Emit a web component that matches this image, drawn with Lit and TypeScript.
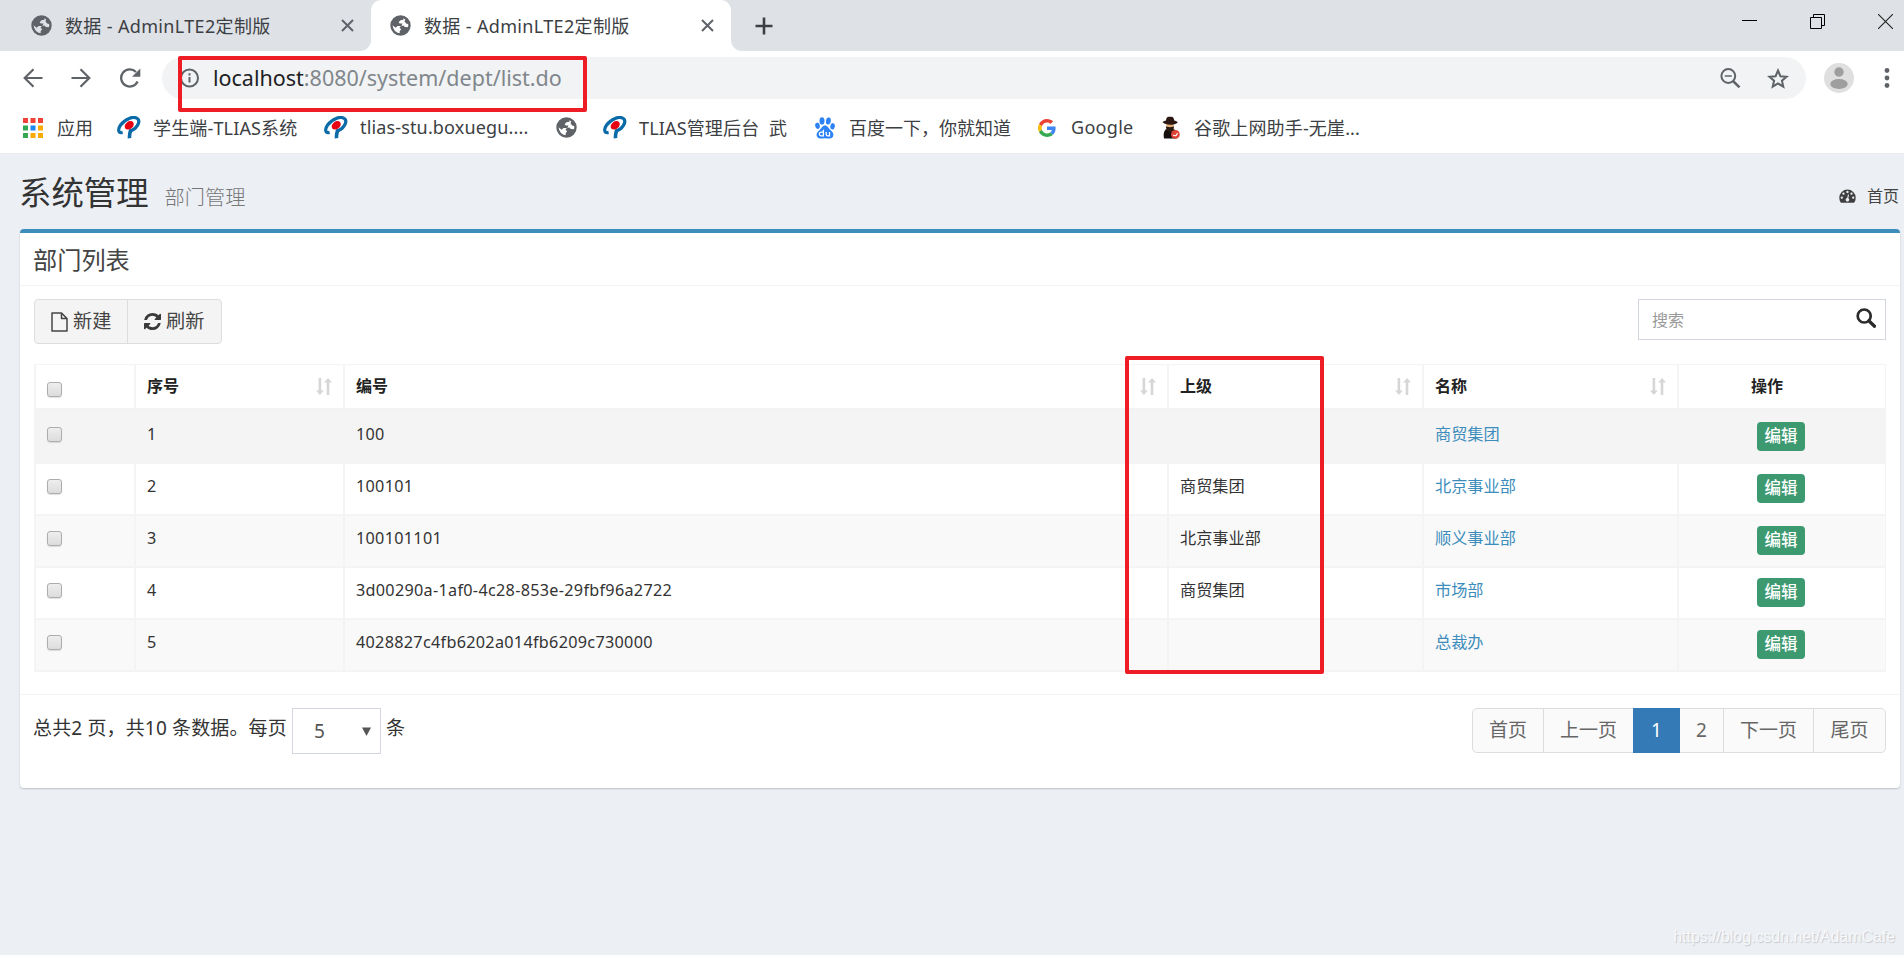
import { LitElement, html, css, svg, nothing } from "lit";
import { customElement } from "lit/decorators.js";

const globe = html`<svg width="21" height="21" viewBox="0 0 21 21"><circle cx="10.5" cy="10.5" r="9" fill="var(--globe-bg, #fff)" stroke="#5f6368" stroke-width="2.400"/><path d="M9.500 1.500C5 2 1.800 5.500 1.500 9.500l4.200 3.200 1.800-1.800h3.800l1.200-2.400h-2.700L8.600 7.200l1.900-1.900 3-.6V2.200zM10.800 11l-1.300 1.700 1.700 1.600-1.500 1.600v3.600c4.500 0 8-2.900 9.300-7.200l-4.200-.4-1.300-1.300zM15.500 3.500l-1 3 2 2.300 2.500.2c-.5-2.400-1.700-4.300-3.500-5.500z" fill="#5f6368"/></svg>`;
const tlias = html`<svg width="24" height="23" viewBox="0 0 24 23"><path d="M5.600 16.400C1.200 17.400.500 13.500 3.600 9 8 2.800 16.500-.200 20.300 2.500c4 3-1 11-7.800 12.600" fill="none" stroke="#0a6ba8" stroke-width="3.200"/><path d="M12 13.500c-1 3-1.300 5.500-1.300 9l3.600-.500c-.2-3 .4-5 1.600-8z" fill="#0a6ba8"/><ellipse cx="12.200" cy="9.300" rx="5" ry="3.700" transform="rotate(-38 12.200 9.300)" fill="#e60012"/></svg>`;
const baidu = html`<svg width="20" height="22" viewBox="0 0 20 22"><g fill="#2d82f5"><ellipse cx="7" cy="3.900" rx="2.500" ry="3.600"/><ellipse cx="13.400" cy="4" rx="2.400" ry="3.500" transform="rotate(8 13.400 4)"/><ellipse cx="2.500" cy="8.800" rx="2.300" ry="3.200" transform="rotate(-12 2.500 8.800)"/><ellipse cx="17.600" cy="9.300" rx="2.300" ry="3.200" transform="rotate(8 17.600 9.300)"/><path d="M10 8.500c2.600 0 3.300 2.600 5.400 4.400 2.400 2 3.600 3.700 2.800 6-.9 2.600-3.300 2.800-8.200 2.300-4.900.5-7.300.3-8.200-2.300-.8-2.300.4-4 2.800-6C6.700 11.100 7.400 8.500 10 8.500z"/></g><path d="M8.400 12.800v6H6.200a1.800 1.800 0 0 1 0-3.700h2M11.200 15v2.300q0 1.500 1.400 1.500h1.900V15" stroke="#fff" stroke-width="1.300" fill="none"/></svg>`;
const google = html`<svg width="18" height="18" viewBox="0 0 48 48"><path fill="#EA4335" d="M24 9.500c3.540 0 6.710 1.220 9.210 3.600l6.850-6.850C35.900 2.380 30.470 0 24 0 14.620 0 6.510 5.380 2.560 13.220l7.980 6.190C12.430 13.720 17.740 9.500 24 9.500z"/><path fill="#4285F4" d="M46.980 24.550c0-1.570-.15-3.090-.38-4.550H24v9.020h12.940c-.58 2.960-2.260 5.480-4.780 7.180l7.730 6c4.510-4.180 7.090-10.360 7.090-17.650z"/><path fill="#FBBC05" d="M10.530 28.590c-.48-1.450-.76-2.990-.76-4.590s.27-3.140.76-4.590l-7.980-6.190C.92 16.460 0 20.120 0 24c0 3.880.92 7.540 2.560 10.780l7.970-6.190z"/><path fill="#34A853" d="M24 48c6.480 0 11.930-2.130 15.890-5.810l-7.730-6c-2.150 1.450-4.920 2.300-8.160 2.300-6.260 0-11.570-4.220-13.470-9.910l-7.980 6.190C6.510 42.620 14.620 48 24 48z"/></svg>`;
const agent = html`<svg width="18" height="23" viewBox="0 0 18 23"><path d="M2 22.500c-.7-4-.5-7 2-9.500l3.800 2.500L12 13c2.400 2 3 5.500 2.400 9.500z" fill="#15100e"/><path d="M4.200 7.500h7.600l-.3 4.500-3.500 2.500L4.500 12z" fill="#e5ae78"/><path d="M3.800 10.500l4 .8 4.300-.8-.8 4-3.400 2-3.200-2z" fill="#2a1a12"/><path d="M.5 6.300C1.800 5 3 5 4 4.600 4.200 1.200 5.500.2 8 .8c2.800-.6 4 .6 4.200 3.700 1.200.4 2.300.5 3.600 1.900-3 3-12 3.200-15.300-.1z" fill="#2c1712"/><circle cx="13.400" cy="18.400" r="4.400" fill="#dd4435"/><path d="M11 19.500c1-.8 1.800.8 3 0s.5-2 1.800-2.300" stroke="#fff" stroke-width="1.100" fill="none"/></svg>`;
const appColors = ["#f04238", "#f04238", "#f04238", "#34a853", "#1e88f5", "#fbab05", "#34a853", "#fbab05", "#fbab05"];
const apps = html`<svg width="20" height="20" viewBox="0 0 20 20">${appColors.map((c, i) => svg`<rect x=${(i % 3) * 7.5} y=${Math.floor(i / 3) * 7.5} width="5" height="5" fill=${c} />`)}</svg>`;
const closeX = html`<svg width="13" height="13" viewBox="0 0 13 13"><path d="M1 1l11 11M12 1L1 12" stroke="#5f6368" stroke-width="2"/></svg>`;
const sortIcon = html`<svg class="sort" width="16" height="17" viewBox="0 0 16 17"><path d="M2.600 0h2.600v12.500h2.600l-3.900 4.500-3.900-4.500h2.600zM10.700 17h2.600V4.500H16L12.100 0 8.100 4.500h2.600z" fill="#d6d6d6"/></svg>`;

interface Bookmark { cls: string; icon: unknown; text: string; }
const bookmarks: Bookmark[] = [
  { cls: "m-apps", icon: apps, text: "应用" },
  { cls: "m-stu", icon: tlias, text: "学生端-TLIAS系统" },
  { cls: "m-box", icon: tlias, text: "tlias-stu.boxuegu...." },
  { cls: "m-globe", icon: globe, text: "" },
  { cls: "m-admin", icon: tlias, text: "TLIAS管理后台  武" },
  { cls: "m-baidu", icon: baidu, text: "百度一下，你就知道" },
  { cls: "m-google", icon: google, text: "Google" },
  { cls: "m-agent", icon: agent, text: "谷歌上网助手-无崖..." },
];

interface Dept { id: number; code: string; parent: string; name: string; }
const rows: Dept[] = [
  { id: 1, code: "100", parent: "", name: "商贸集团" },
  { id: 2, code: "100101", parent: "商贸集团", name: "北京事业部" },
  { id: 3, code: "100101101", parent: "北京事业部", name: "顺义事业部" },
  { id: 4, code: "3d00290a-1af0-4c28-853e-29fbf96a2722", parent: "商贸集团", name: "市场部" },
  { id: 5, code: "4028827c4fb6202a014fb6209c730000", parent: "", name: "总裁办" },
];

@customElement("browser-chrome")
export class BrowserChrome extends LitElement {
  static styles = css`
    :host { display: block; height: 153px; background: #fff; border-bottom: 1px solid #ededed; color: #3c4043; font-size: 18px; }
    svg { display: block; flex: none; }
    .strip { display: flex; background: linear-gradient(#dee1e6 40px, #fff 40px); }
    .tab { display: flex; align-items: center; height: 51px; box-sizing: border-box; padding: 0 17px 1px 19px; white-space: nowrap; letter-spacing: 0.35px; }
    .first { width: 371px; padding-left: 31px; background: #dee1e6; border-radius: 0 0 11px 0; --globe-bg: #dee1e6; }
    .active { width: 360px; background: #fff; border-radius: 10px 10px 0 0; }
    .rest { flex: 1; display: flex; background: #dee1e6; border-radius: 0 0 0 11px; }
    .label { margin-left: 13px; flex: 1; }
    .plus { margin: 17px auto 0 24px; }
    .win { display: flex; gap: 53px; margin: 14px 11px 0 0; }
    .bar { display: flex; align-items: center; height: 54px; box-sizing: border-box; padding: 0 14px 0 23px; }
    .nav { display: flex; gap: 28px; width: 139px; }
    .url { display: flex; align-items: center; width: 1644px; height: 42px; box-sizing: border-box; border-radius: 21px; background: #f1f3f4; padding: 0 17px 0 18px; }
    .addr { margin-left: 14px; font-size: 21.5px; line-height: 41px; padding-bottom: 1px; color: #80868b; flex: 1; }
    .host { color: #202124; }
    .star { margin-left: 26px; }
    .avatar { margin-left: 18px; }
    .dots { margin-left: 30px; }
    .marks { display: flex; align-items: center; height: 44px; padding: 0 0 0 23px; white-space: pre; letter-spacing: 0.15px; }
    .marks svg { margin-top: 1px; }
    .mark { display: flex; align-items: center; box-sizing: border-box; }
    .m-apps { width: 94px; gap: 14px; letter-spacing: 0; }
    .m-stu { width: 207px; gap: 12px; }
    .m-box { width: 232px; gap: 12px; }
    .m-globe { width: 47px; }
    .m-admin { width: 212px; gap: 12px; }
    .m-baidu { width: 223px; gap: 14px; letter-spacing: 0; }
    .m-google { width: 124px; gap: 15px; letter-spacing: 0.3px; }
    .m-agent { gap: 14px; }
  `;
  render() {
    return html`
      <div class="strip">
        <div class="tab first">${globe}<span class="label">数据 - AdminLTE2定制版</span>${closeX}</div>
        <div class="tab active">${globe}<span class="label">数据 - AdminLTE2定制版</span>${closeX}</div>
        <div class="rest">
          <svg class="plus" width="18" height="18" viewBox="0 0 18 18"><path d="M9 .5v17M.5 9h17" stroke="#3c4043" stroke-width="2.600"/></svg>
          <div class="win">
            <svg width="15" height="15" viewBox="0 0 15 15"><path d="M0 6.500h15" stroke="#000"/></svg>
            <svg width="15" height="15" viewBox="0 0 15 15"><path d="M.5 3.500h11v11H.500zM3.500 3.500v-3h11v11h-3" stroke="#000" fill="none"/></svg>
            <svg width="15" height="15" viewBox="0 0 15 15"><path d="M0 0l15 15M15 0L0 15" stroke="#222" stroke-width="1.100"/></svg>
          </div>
        </div>
      </div>
      <div class="bar">
        <div class="nav">
          <svg width="20" height="20" viewBox="0 0 20 20"><path d="M19.500 10H2M10.500 1.200L1.700 10l8.800 8.800" stroke="#5f6368" stroke-width="2.200" fill="none"/></svg>
          <svg width="20" height="20" viewBox="0 0 20 20"><path d="M.5 10H18M9.500 1.200l8.800 8.800-8.800 8.800" stroke="#5f6368" stroke-width="2.200" fill="none"/></svg>
          <svg width="22" height="20" viewBox="0 0 22 20"><path d="M18.600 13.500A8.600 8.600 0 1 1 17 4" stroke="#5f6368" stroke-width="2.300" fill="none"/><path d="M21.300.500v8.200h-8.200z" fill="#5f6368"/></svg>
        </div>
        <div class="url">
          <svg width="19" height="20" viewBox="0 0 19 20"><circle cx="9.500" cy="10" r="8.500" stroke="#5f6368" stroke-width="2" fill="none"/><path d="M9.500 9v5.500M9.500 5.200v2.200" stroke="#5f6368" stroke-width="2"/></svg>
          <span class="addr"><span class="host">localhost</span>:8080/system/dept/list.do</span>
          <svg width="21" height="20" viewBox="0 0 21 20"><circle cx="8.300" cy="8" r="6.900" stroke="#5f6368" stroke-width="2" fill="none"/><path d="M13 13l6.500 6.300" stroke="#5f6368" stroke-width="2.500"/><path d="M4.800 8h7" stroke="#5f6368" stroke-width="1.500"/></svg>
          <svg class="star" width="22" height="21" viewBox="0 0 22 21"><path d="M11 2.500l2.400 5.700 6.200.5-4.700 4 1.400 6L11 15.500l-5.300 3.200 1.400-6-4.700-4 6.200-.5z" stroke="#5f6368" stroke-width="2" fill="none"/></svg>
        </div>
        <svg class="avatar" width="30" height="30" viewBox="0 0 30 30"><circle cx="15" cy="15" r="15" fill="#dfdfdf"/><circle cx="15" cy="9" r="4.700" fill="#9e9e9e"/><ellipse cx="15" cy="21" rx="8.700" ry="5" fill="#9e9e9e"/></svg>
        <svg class="dots" width="6" height="20" viewBox="0 0 6 20"><g fill="#5f6368"><circle cx="3" cy="2.500" r="2.400"/><circle cx="3" cy="10" r="2.400"/><circle cx="3" cy="17.500" r="2.400"/></g></svg>
      </div>
      <div class="marks">${bookmarks.map((b) => html`<div class="mark ${b.cls}">${b.icon}${b.text ? html`<span>${b.text}</span>` : nothing}</div>`)}</div>`;
  }
}

@customElement("dept-page")
export class DeptPage extends LitElement {
  static styles = css`
    :host { display: block; padding: 0 4px 0 20px; color: #333; font-size: 16px; }
    svg { display: block; flex: none; }
    .head { display: flex; align-items: baseline; height: 75px; line-height: 76px; }
    .title { font-size: 32.4px; margin-left: -1px; }
    .sub { margin-left: 16px; font-size: 20.2px; font-weight: 300; color: #777; }
    .crumb { display: flex; align-items: center; gap: 11px; margin-left: auto; color: #444; height: 76px; line-height: 24px; padding: 8px 1px 0 0; box-sizing: border-box; align-self: flex-start; }
    .box { background: #fff; border-top: 4px solid #3c8dbc; border-radius: 4px; box-shadow: 0 1px 2px rgba(0, 0, 0, 0.2); height: 555px; }
    .boxhead { height: 52px; line-height: 53px; border-bottom: 1px solid #f4f4f4; font-size: 24.2px; color: #444; padding-left: 13px; }
    .tools { display: flex; justify-content: space-between; align-items: flex-start; padding: 13px 14px 0; height: 65px; box-sizing: content-box; }
    .btns { display: flex; height: 43px; border: 1px solid #ddd; border-radius: 4px; background: #f4f4f4; color: #444; font-size: 19.2px; line-height: 41px; }
    .btn { display: flex; align-items: center; box-sizing: border-box; }
    .btn span { padding-bottom: 2px; }
    .new { width: 93px; gap: 5px; padding-left: 16px; border-right: 1px solid #ddd; }
    .refresh { width: 93px; gap: 5px; padding-left: 16px; }
    .search { display: flex; align-items: center; justify-content: space-between; width: 248px; height: 41px; box-sizing: border-box; border: 1px solid #d2d6de; padding: 0 9px 0 13px; color: #999; }
    .search span { padding-bottom: 2px; }
    .search svg { margin-bottom: 4px; }
    table { width: 1852px; table-layout: fixed; border-collapse: separate; border-spacing: 0; margin-left: 14px; border-top: 1px solid #f4f4f4; border-right: 1px solid #f4f4f4; }
    th, td { box-sizing: border-box; border-left: 2px solid #f4f4f4; padding: 0 0 0 11px; text-align: left; vertical-align: top; white-space: nowrap; }
    th { height: 47px; border-bottom: 4px solid #f3f3f3; color: #222; line-height: 43px; }
    td { height: 52px; border-bottom: 2px solid #f4f4f4; line-height: 44px; font-size: 16.2px; }
    .c1 { width: 100px; } .c2 { width: 209px; } .c3 { width: 824px; } .c4 { width: 255px; } .c5 { width: 255px; }
    .odd td { background: #f9f9f9; }
    .hover td { background: #f4f4f4; }
    .th { display: flex; justify-content: space-between; padding-right: 11px; }
    .sort { margin-top: 13px; }
    .box1 { width: 15px; height: 15px; box-sizing: border-box; border: 1px solid #adadad; border-radius: 3px; background: linear-gradient(#eee, #dcdcdc); box-shadow: 0 1px 1px rgba(0, 0, 0, 0.12); margin-top: 15px; }
    th .box1 { margin-top: 17px; }
    .code { letter-spacing: 0.3px; }
    .link { color: #3c8dbc; }
    .op { padding: 0 30px 0 0; text-align: center; }
    td.op { padding: 10px 2px 0 0; }
    .edit { display: block; width: 48px; height: 29px; margin: 0 auto; line-height: 28px; border-radius: 4px; background: #3d9970; color: #fff; font-size: 16.5px; font-weight: 500; }
    .foot { display: flex; justify-content: space-between; align-items: flex-start; height: 93px; margin-top: 22px; border-top: 1px solid #f4f4f4; padding: 13px 14px 0 13px; box-sizing: border-box; font-size: 19px; }
    .total { display: flex; white-space: pre; line-height: 41px; letter-spacing: 0.15px; }
    .count { width: 259px; }
    .select { display: flex; align-items: center; justify-content: space-between; width: 89px; height: 46px; box-sizing: border-box; border: 1px solid #d2d6de; color: #555; padding: 0 9px 0 21px; margin-right: 5px; line-height: 44px; }
    .pages { display: flex; height: 45px; box-sizing: border-box; border: 1px solid #ddd; border-radius: 5px; background: #fafafa; color: #666; line-height: 42px; }
    .pg { box-sizing: border-box; text-align: center; border-left: 1px solid #ddd; width: 90px; }
    .w71 { width: 70px; border-left: none; }
    .cur { width: 47px; margin: -1px 0; line-height: 44px; background: #337ab7; color: #fff; border: none; }
    .two { width: 43px; border: none; }
    .last { width: 72px; }
  `;
  render() {
    return html`
      <div class="head">
        <span class="title">系统管理</span><span class="sub">部门管理</span>
        <span class="crumb"><svg width="17" height="14" viewBox="0 0 17 14"><path d="M8.500.5A8.200 8.200 0 0 0 .3 8.700c0 1.700.4 3.200 1.200 4.500.2.300.4.500.8.500h12.400c.4 0 .6-.2.800-.5.800-1.300 1.200-2.800 1.200-4.500A8.200 8.200 0 0 0 8.500.5z" fill="#3f3f3f"/><g fill="#ecf0f5"><circle cx="2.800" cy="8.700" r="1.150"/><circle cx="4.500" cy="4.700" r="1.150"/><circle cx="8.500" cy="3" r="1.150"/><circle cx="12.500" cy="4.700" r="1.150"/><circle cx="14.200" cy="8.700" r="1.150"/><path d="M9 5.500l1 .3-.7 3.400a1.800 1.800 0 1 1-1.100-.2z"/></g></svg><span>首页</span></span>
      </div>
      <div class="box">
        <div class="boxhead">部门列表</div>
        <div class="tools">
          <div class="btns">
            <div class="btn new"><svg width="17" height="20" viewBox="0 0 17 20"><path d="M1 1h9.500L16 6.500V19H1zM10.500 1v5.500H16" fill="none" stroke="#444" stroke-width="1.500" stroke-linejoin="round"/></svg><span>新建</span></div>
            <div class="btn refresh"><svg width="17" height="17" viewBox="0 0 1536 1536"><path fill="#3a3a3a" d="M1511 928q0 5-1 7-64 268-268 434.500T764 1536q-146 0-282.500-55T238 1324l-129 129q-19 19-45 19t-45-19-19-45V960q0-26 19-45t45-19h448q26 0 45 19t19 45-19 45l-137 137q71 66 161 102t187 36q134 0 250-65t186-179q11-17 53-117 8-23 30-23h192q13 0 22.500 9.500t9.500 22.500zm25-800v448q0 26-19 45t-45 19h-448q-26 0-45-19t-19-45 19-45l138-138Q969 256 768 256q-134 0-250 65T332 500q-11 17-53 117-8 23-30 23H50q-13 0-22.500-9.500T18 608v-7q65-268 270-434.500T768 0q146 0 284 55.500T1297 212l130-129q19-19 45-19t45 19 19 45z"/></svg><span>刷新</span></div>
          </div>
          <div class="search"><span>搜索</span><svg width="20" height="20" viewBox="0 0 20 20"><circle cx="8.200" cy="8" r="6.500" fill="none" stroke="#2b2b2b" stroke-width="2.700"/><path d="M12.800 12.800l5.700 5.400" stroke="#2b2b2b" stroke-width="3.300" stroke-linecap="round"/></svg></div>
        </div>
        <table>
          <thead><tr>
            <th class="c1"><div class="box1"></div></th>
            <th class="c2"><div class="th">序号${sortIcon}</div></th>
            <th class="c3"><div class="th">编号${sortIcon}</div></th>
            <th class="c4"><div class="th">上级${sortIcon}</div></th>
            <th class="c5"><div class="th">名称${sortIcon}</div></th>
            <th class="op">操作</th>
          </tr></thead>
          <tbody>${rows.map((r, i) => html`<tr class=${i === 0 ? "hover" : i % 2 ? "even" : "odd"}>
            <td><div class="box1"></div></td><td>${r.id}</td><td class="code">${r.code}</td><td>${r.parent}</td>
            <td><span class="link">${r.name}</span></td><td class="op"><span class="edit">编辑</span></td>
          </tr>`)}</tbody>
        </table>
        <div class="foot">
          <div class="total"><span class="count">总共2 页，共10 条数据。每页</span><span class="select"><span>5</span><svg width="9" height="9" viewBox="0 0 9 9"><path d="M0 .5h9L4.500 9z" fill="#555"/></svg></span><span>条</span></div>
          <div class="pages"><span class="pg w71">首页</span><span class="pg">上一页</span><span class="pg cur">1</span><span class="pg two">2</span><span class="pg">下一页</span><span class="pg last">尾页</span></div>
        </div>
      </div>`;
  }
}

@customElement("app-root")
export class AppRoot extends LitElement {
  static styles = css`
    :host { display: block; position: relative; height: 955px; overflow: hidden; background: #ecf0f5; font-family: "Noto Sans", "Noto Sans CJK SC", sans-serif; }
    .frame { position: absolute; box-sizing: border-box; border: 4px solid #ee1c25; border-radius: 2px; }
    .f-url { left: 178px; top: 56px; width: 409px; height: 56px; }
    .f-col { left: 1125px; top: 356px; width: 199px; height: 318px; }
    .water { position: absolute; right: 9px; bottom: 8px; font: 15.9px/20px "Liberation Sans", Arial, sans-serif; color: #f7f8fa; text-shadow: 1px 1px 1px #c4c7cc; }
  `;
  render() {
    return html`<browser-chrome></browser-chrome><dept-page></dept-page>
      <div class="frame f-url"></div><div class="frame f-col"></div>
      <div class="water">https://blog.csdn.net/AdamCafe</div>`;
  }
}
